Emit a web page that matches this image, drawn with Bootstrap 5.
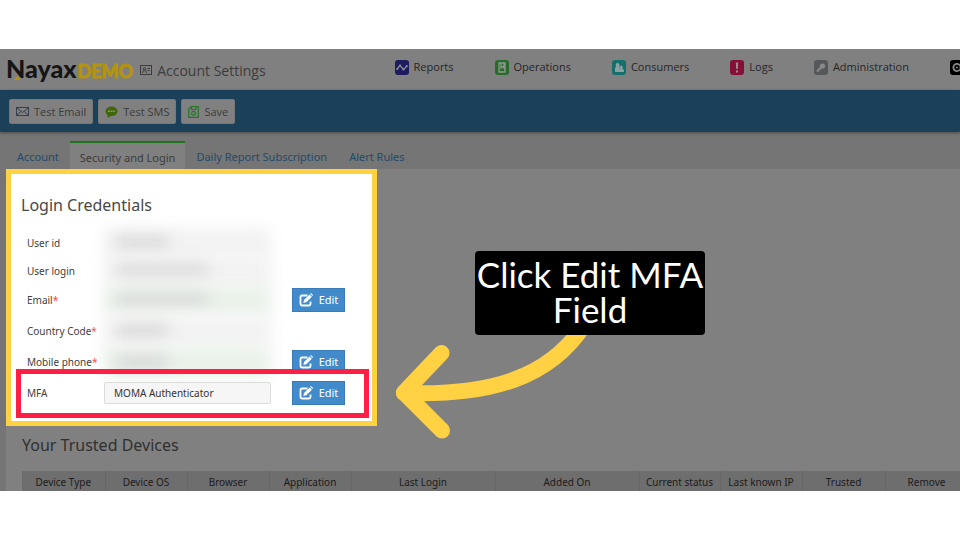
<!DOCTYPE html>
<html lang="en">
<head>
<meta charset="utf-8">
<meta name="viewport" content="width=device-width, initial-scale=1">
<title>Account Settings</title>
<link href="https://cdn.jsdelivr.net/npm/bootstrap@5.3.0/dist/css/bootstrap.min.css" rel="stylesheet">
<style>
body { font-family: "Open Sans", "Noto Sans", sans-serif; font-size: 11px; line-height: 16px; color: #2b2b2b; background: #fff; overflow-x: hidden; }
a { text-decoration: none; }
.stage { background: #757575; margin: 49px 0; height: calc(100vh - 98px); min-height: 442px; }
.topbar { background: #808080; height: 41px; padding-left: 6px; }
.brand { font-family: Lato, sans-serif; font-weight: 900; font-size: 25px; line-height: 24px; color: #151515; }
.brand span { font-size: 18px; font-weight: 700; color: #b39310; -webkit-text-stroke: 1px #b39310; margin-left: 1px; }
.brand-tick { left: 8px; bottom: 3px; }
.page-title { font-size: 14px; line-height: 20px; color: #3c3c3c; margin: 2px 0 0 7px; }
.menu { gap: 41px; margin-left: 129px; margin-top: -5px; }
.menu a { gap: 5px; color: #262626; }
.toolbar { background: #1a405a; height: 42px; gap: 5px; padding: 1px 9px 0; box-shadow: 0 1px 3px #4a4a4a; }
.toolbar .btn { background: #808080; color: #3c3c3c; font-size: 11px; line-height: 16px; height: 25px; padding: 0 6px; border-radius: 2px; gap: 5px; border: 1px solid #777; }
.tabs { padding: 9px 6px 0; font-family: "Noto Sans", sans-serif; }
.tabs .nav-link { color: #244a69; padding: 8px 11px 3px; line-height: 16px; }
.tabs .nav-link.active { background: #808080; color: #3c3c3c; border-top: 2px solid #1f751b; padding: 7px 10px 3px; border-radius: 0; }
.panel { background: #808080; margin-left: 6px; font-family: "Noto Sans", sans-serif; }
.spot { width: 371px; border: 5px solid #ffd143; background: #fff; color: #404040; padding: 19px 10px 13px; }
.sect { font-size: 16px; line-height: 24px; font-weight: 400; margin: 0; }
.spot .sect { color: #484848; margin-bottom: 11px; }
.field { display: grid; grid-template-columns: 77px 167px 53px; align-items: center; padding-left: 6px; height: 31px; font-size: 10px; }
.field.short { height: 28px; }
.field > :nth-child(3) { margin-left: 21px; width: 53px; }
.field label { white-space: nowrap; }
.field label b { color: #ff4040; font-weight: 400; }
.field input { width: 100%; height: 22px; border: 1px solid #dcdcdc; border-radius: 2px; background: #f6f6f6; font-size: 10px; color: #333; padding: 0 9px; }
.field input.veiled { height: 30px; border: 0; filter: blur(8px); background: linear-gradient(#d2d2d2, #d2d2d2) 12px 9px / 52px 11px no-repeat #f2f2f2; }
.field input.veiled.wide { background-size: 92px 10px; }
.field input.veiled.ok { background-color: #e9f1e9; }
.edit { background: #428bca; color: #fff; height: 24px; border: 1px solid #387db8; border-radius: 0; font-size: 11px; line-height: 16px; padding: 0; gap: 6px; }
.edit:hover { background: #3277b4; color: #fff; }
.frame { left: -5px; right: -7px; top: -8px; bottom: -10px; border: 5px solid #ff1f45; pointer-events: none; }
.devices { padding: 7px 0 0 16px; overflow: hidden; }
.devices .sect { color: #303030; margin-bottom: 14px; }
.devices table { width: 946px; table-layout: fixed; font-size: 10px; }
.devices th { background: #6e6e6e; color: #1c1c1c; font-weight: 400; text-align: center; height: 24px; padding: 3px 0 0; border-right: 1px solid #666; vertical-align: top; white-space: nowrap; }
.callout { left: 475px; top: 251px; width: 230px; background: #000; color: #fff; border-radius: 4px; font-family: Lato, sans-serif; font-size: 35px; padding: 6px 0 8px; white-space: nowrap; line-height: 35px; }
.pointer { left: 390px; top: 325px; }
</style>
<script src="https://cdn.jsdelivr.net/npm/bootstrap@5.3.0/dist/js/bootstrap.bundle.min.js"></script>
</head>
<body class="position-relative">
<svg class="d-none" aria-hidden="true">
  <symbol id="pen" viewBox="0 0 14 14"><path d="M8.500 2.500H3Q1.500 2.500 1.500 4V11Q1.500 12.500 3 12.500H10Q11.500 12.500 11.500 11V8.500" fill="none" stroke="#fff" stroke-width="1.800"/><path d="M4.300 9.900 5 7 10.600 1.400 12.900 3.700 7.300 9.300Z" fill="#fff"/><path d="M11.200.8 12 0 14 2 13.300 2.900Z" fill="#fff"/></symbol>
</svg>
<main class="stage overflow-hidden">
  <header class="topbar d-flex align-items-center overflow-hidden text-nowrap">
    <div class="brand position-relative flex-shrink-0">Nayax<span>DEMO</span>
      <svg class="brand-tick position-absolute" width="7" height="4" viewBox="0 0 7 4"><path d="M0 4 3 0 7 4Z" fill="#b39310"/></svg>
    </div>
    <div class="page-title d-flex align-items-center flex-shrink-0 gap-1">
      <svg width="13" height="11" viewBox="0 0 13 11" fill="none" stroke="#3c3c3c"><rect x=".5" y=".5" width="11" height="9"/><path d="M7.500 3.500H10M7.500 5.500H9.500M2.500 8Q2.500 5.500 4.500 5.500T6.500 8"/><circle cx="4.500" cy="3.800" r="1.200"/></svg>
      Account Settings
    </div>
    <nav class="menu d-flex flex-shrink-0">
      <a href="#" class="d-flex align-items-center"><svg width="14" height="15" viewBox="0 0 14 15"><rect width="14" height="15" rx="3" fill="#1e1b5e"/><path d="M2 9 5 5.500 8.500 9.500 12 6" fill="none" stroke="#8b8b9c" stroke-width="1.300"/><g fill="#8b8b9c"><circle cx="2.300" cy="9" r="1.100"/><circle cx="5" cy="5.500" r="1.100"/><circle cx="8.500" cy="9.500" r="1.100"/><circle cx="11.800" cy="6" r="1.100"/></g></svg>Reports</a>
      <a href="#" class="d-flex align-items-center"><svg width="14" height="15" viewBox="0 0 14 15"><rect width="14" height="15" rx="3" fill="#2b6a2d"/><path d="M4 3H10V12H4ZM6 3V8L8 6.500 9 8V3" fill="none" stroke="#8b9a8b" stroke-width="1.300"/></svg>Operations</a>
      <a href="#" class="d-flex align-items-center"><svg width="14" height="15" viewBox="0 0 14 15"><rect width="14" height="15" rx="3" fill="#14706c"/><path d="M3 12V8L4 7Q3 3 5.500 3T7.500 7L8.500 12ZM8 12 8 8Q7.500 5.500 9.300 5.500T10.500 8.500L12 10V12Z" fill="#8aa19f"/></svg>Consumers</a>
      <a href="#" class="d-flex align-items-center"><svg width="14" height="15" viewBox="0 0 14 15"><rect width="14" height="15" rx="3" fill="#850f37"/><path d="M5.800 2.500H8.200L7.800 9H6.200ZM6 10.500H8V12.500H6Z" fill="#a58a92"/></svg>Logs</a>
      <a href="#" class="d-flex align-items-center"><svg width="14" height="15" viewBox="0 0 14 15"><rect width="14" height="15" rx="3" fill="#55585a"/><circle cx="8.500" cy="6" r="2.600" fill="#8a8a8a"/><path d="M7.500 7 3 11.500" stroke="#8a8a8a" stroke-width="2.200"/></svg>Administration</a>
      <a href="#" class="d-flex align-items-center" aria-label="More"><svg width="14" height="15" viewBox="0 0 14 15"><rect width="14" height="15" rx="3"/><circle cx="7" cy="7.500" r="3.600" fill="none" stroke="#8a8a8a" stroke-width="1.800"/><circle cx="7" cy="7.500" r="1" fill="#8a8a8a"/></svg></a>
    </nav>
  </header>
  <div class="toolbar d-flex align-items-center">
    <button type="button" class="btn d-flex align-items-center"><svg width="13" height="9" viewBox="0 0 13 9" fill="none" stroke="#343f52"><rect x=".5" y=".5" width="12" height="8"/><path d="M1 1 6.500 5.500 12 1M1 8 4.800 4.500M12 8 8.200 4.500"/></svg>Test Email</button>
    <button type="button" class="btn d-flex align-items-center"><svg width="13" height="12" viewBox="0 0 13 12"><ellipse cx="6.500" cy="5.300" rx="6" ry="4.800" fill="#3f6608"/><path d="M2.500 8 2.800 12 6.500 9.500Z" fill="#3f6608"/><path d="M3 5.300H10" stroke="#84955f" stroke-width="1.600" stroke-dasharray="2 .6"/></svg>Test SMS</button>
    <button type="button" class="btn d-flex align-items-center"><svg width="11" height="12" viewBox="0 0 11 12" fill="none" stroke="#23782a" stroke-width="1.200"><path d="M.7 3 3 .7H10.300V11.300H.7ZM3.500 1V3.500H8V1"/><circle cx="5.500" cy="7.200" r="1.900"/></svg>Save</button>
  </div>
  <nav class="tabs nav flex-nowrap text-nowrap">
    <a class="nav-link" href="#">Account</a>
    <a class="nav-link active" href="#" aria-current="page">Security and Login</a>
    <a class="nav-link" href="#">Daily Report Subscription</a>
    <a class="nav-link" href="#">Alert Rules</a>
  </nav>
  <div class="panel">
    <form class="spot">
      <h2 class="sect">Login Credentials</h2>
      <div class="field short"><label for="uid">User id</label><input id="uid" class="veiled" readonly></div>
      <div class="field short"><label for="login">User login</label><input id="login" class="veiled wide" readonly></div>
      <div class="field"><label for="email">Email<b>*</b></label><input id="email" class="veiled wide ok" readonly><button type="button" class="btn edit d-flex align-items-center justify-content-center"><svg width="14" height="14"><use href="#pen"/></svg>Edit</button></div>
      <div class="field"><label for="country">Country Code<b>*</b></label><input id="country" class="veiled" readonly></div>
      <div class="field"><label for="phone">Mobile phone<b>*</b></label><input id="phone" class="veiled ok" readonly><button type="button" class="btn edit d-flex align-items-center justify-content-center"><svg width="14" height="14"><use href="#pen"/></svg>Edit</button></div>
      <div class="field position-relative"><label for="mfa">MFA</label><input id="mfa" value="MOMA Authenticator" readonly><button type="button" class="btn edit d-flex align-items-center justify-content-center"><svg width="14" height="14"><use href="#pen"/></svg>Edit</button><div class="frame position-absolute"></div></div>
    </form>
    <section class="devices">
      <h2 class="sect">Your Trusted Devices</h2>
      <table>
        <colgroup><col width="83"><col width="82"><col width="82"><col width="82"><col width="144"><col width="144"><col width="81"><col width="82"><col width="83"><col width="83"></colgroup>
        <thead><tr><th>Device Type</th><th>Device OS</th><th>Browser</th><th>Application</th><th>Last Login</th><th>Added On</th><th>Current status</th><th>Last known IP</th><th>Trusted</th><th>Remove</th></tr></thead>
      </table>
    </section>
  </div>
</main>
<svg class="pointer position-absolute" width="210" height="120" viewBox="0 0 210 120" fill="none" stroke="#ffd143" stroke-linecap="round" stroke-linejoin="round"><path d="M14 68C102 71 160 52 194 0" stroke-width="16"/><path d="M51.500 28 14 67.500 52 105.500" stroke-width="16"/></svg>
<div class="callout position-absolute text-center">Click Edit MFA<br>Field</div>
</body>
</html>
